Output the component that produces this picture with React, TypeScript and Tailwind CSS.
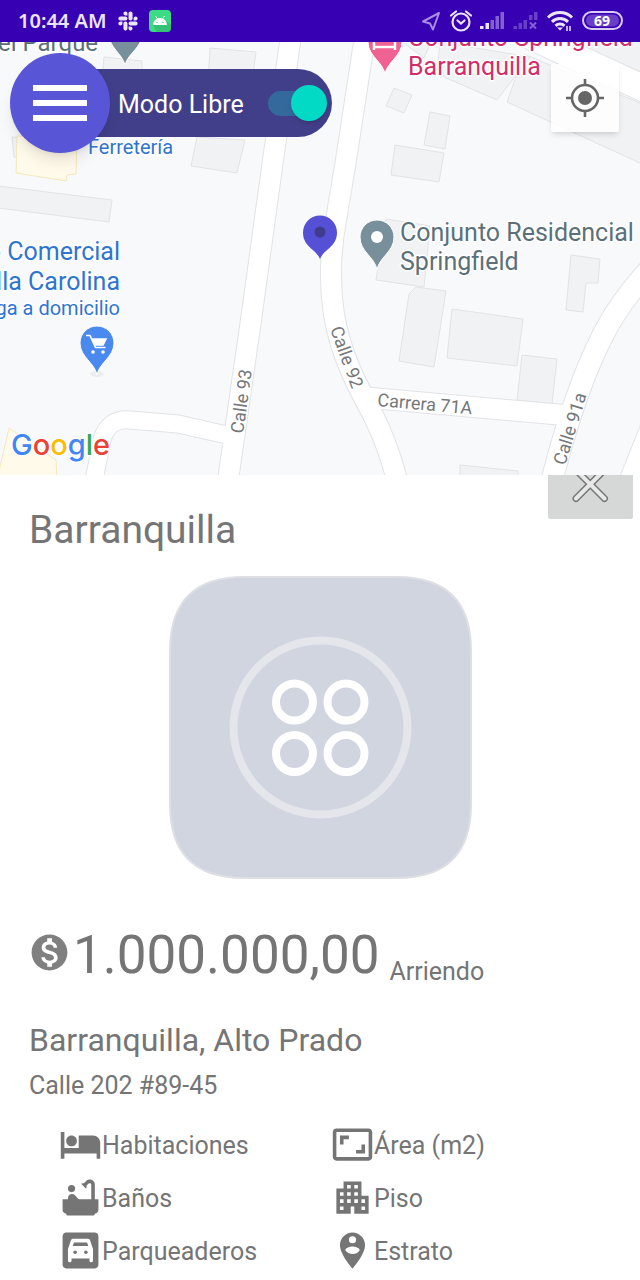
import { FaSlack } from "react-icons/fa";
import {
  MdApartment,
  MdAspectRatio,
  MdBathtub,
  MdGarage,
  MdHotel,
  MdMonetizationOn,
  MdPersonPinCircle,
} from "react-icons/md";
import type { IconType } from "react-icons";

const features: { label: string; Icon: IconType }[] = [
  { label: "Habitaciones", Icon: MdHotel },
  { label: "Área (m2)", Icon: MdAspectRatio },
  { label: "Baños", Icon: MdBathtub },
  { label: "Piso", Icon: MdApartment },
  { label: "Parqueaderos", Icon: MdGarage },
  { label: "Estrato", Icon: MdPersonPinCircle },
];

function StatusBar() {
  return (
    <header className="flex h-[42px] items-center justify-between bg-[#3700b3] pr-4 pl-[18px] text-[#ece4fa]">
      <div className="flex items-center">
        <span className="font-['Noto_Sans',sans-serif] text-[20px] leading-6 font-semibold">10:44 AM</span>
        <FaSlack className="ml-[10px] size-[22px]" />
        <svg viewBox="0 0 22 22" className="ml-[10px] size-[22px]" aria-hidden="true">
          <rect width="22" height="22" rx="4" fill="#3ddc84" />
          <path d="M4 15l4 7h10a4 4 0 0 0 4-4v-3l-4-4z" fill="#2fae6b" opacity=".6" />
          <path d="M4 15a7 7 0 0 1 14 0z" fill="#fff" />
          <path d="M6.500 6l2 3M15.500 6l-2 3" stroke="#fff" strokeWidth="1" />
          <circle cx="8" cy="12.300" r=".8" fill="#3ddc84" />
          <circle cx="14" cy="12.300" r=".8" fill="#3ddc84" />
        </svg>
      </div>
      <svg viewBox="420 4 204 36" className="h-9 w-[204px]" aria-label="Batería 69">
        <path d="M439 14L423 22.500l7 2 3 6z" fill="none" stroke="#a98be0" strokeWidth="2" strokeLinejoin="round" />
        <g fill="none" stroke="#ece4fa" strokeWidth="2.200">
          <circle cx="461" cy="23" r="8.500" />
          <path d="M457.500 21.500l3.500 3 3.500-3M451 16.500l5-4M471 16.500l-5-4" strokeLinecap="round" />
        </g>
        <g fill="#ece4fa">
          <rect x="480" y="27" width="3.500" height="3" />
          <rect x="485.500" y="24" width="3.500" height="6" />
        </g>
        <g fill="#8560d2">
          <rect x="490.500" y="21" width="3.500" height="9" />
          <rect x="495.500" y="17" width="3.500" height="13" />
          <rect x="500.500" y="13" width="3.500" height="17" />
        </g>
        <g fill="#6a3fc8">
          <rect x="513.500" y="27" width="3.500" height="3" />
          <rect x="518.500" y="24" width="3.500" height="6" />
          <rect x="523.500" y="21" width="3.500" height="9" />
          <rect x="529" y="16" width="3.500" height="5" />
          <rect x="534" y="13" width="3.500" height="8" />
        </g>
        <path d="M530 23.500l6 6M536 23.500l-6 6" stroke="#8560d2" strokeWidth="2" />
        <g fill="none" stroke="#ece4fa" strokeWidth="3">
          <path d="M548 18.500a17 17 0 0 1 24 0M552 22.800a11.500 11.500 0 0 1 16 0M555.500 26.800a6.500 6.500 0 0 1 9 0" />
        </g>
        <path d="M557 28.500h6l-3 3z" fill="#ece4fa" />
        <path d="M567 27v5M570 27v5" stroke="#ece4fa" strokeWidth="1.500" />
        <rect x="583" y="13" width="39" height="17" rx="8.500" fill="none" stroke="#d9ccf5" strokeWidth="2" />
        <path d="M586 21.500a6 6 0 0 1 6-6h21a6 6 0 0 1 0 12h-21a6 6 0 0 1-6-6z" fill="#6a3fc8" />
        <text x="602" y="26.500" textAnchor="middle" fontSize="14" fontWeight="700" fill="#fff" fontFamily="Noto Sans, sans-serif">69</text>
      </svg>
    </header>
  );
}

const roads = [
  { d: "M291 36L273 160L251 320L228 480", w: 20 },
  { d: "M365 36L346 160L336 220Q327 270 334 315C342 360 360 390 373 415Q388 445 397 480", w: 20 },
  { d: "M360 397L575 416", w: 20 },
  { d: "M660 258Q620 300 602 337Q575 390 552 480", w: 21 },
  { d: "M94 480Q99 455 102 440Q108 418 130 420L178 424L240 438", w: 17 },
];

function CityMap() {
  return (
    <svg
      viewBox="0 42 640 433"
      preserveAspectRatio="xMidYMid slice"
      className="block size-full"
      fontFamily="Roboto, sans-serif"
      role="img"
      aria-label="Mapa"
    >
      <rect y="42" width="640" height="433" fill="#f8f9fb" />
      <g fill="#f1f2f4" stroke="#e1e3e6">
        <path d="M104 57l38 4v20h-40zM210 48l46 4-4 30h-44zM197 137l48 3-8 33-46-7zM12 137l14 1v20l-12-1z" />
        <path d="M-2 186L112 200L109 222L-2 208z" />
        <path d="M394 88L412 95L404 113L386 106zM430 112L450 116L445 149L424 145zM395 145L444 153L439 182L391 175z" />
        <path d="M386 219L430 226L424 287L376 280z" />
        <path d="M409 294L416 287L446 291L434 367L399 361z" />
        <path d="M452 309L523 319L517 366L447 358z" />
        <path d="M522 355L557 359L552 404L517 400z" />
        <path d="M571 255L600 259L598 283L586 283L583 312L566 310z" />
        <path d="M460 465L518 471L518 480L460 480z" />
        <path d="M400 40h32l-8 18zM440 42l90 15-33 43-60-26zM524 54l118 50v60L507 102zM560 36h90v40z" />
      </g>
      <path d="M17 136h60l-1 38-9 1-1 6L16 173z" fill="#fffaea" stroke="#f6e8bb" />
      <path d="M9 428L56 460L57 480H-3z" fill="#fffaea" stroke="#f6e8bb" />
      <path d="M530 36L660 96" stroke="#e3e5e8" strokeWidth="28" />
      <path d="M530 36L660 96" stroke="#fff" strokeWidth="26" />
      <g fill="none">
        {roads.map((r) => (
          <path key={r.d} d={r.d} stroke="#e1e3e6" strokeWidth={r.w + 2} />
        ))}
        {roads.map((r) => (
          <path key={r.d} d={r.d} stroke="#fff" strokeWidth={r.w} />
        ))}
      </g>
      <path d="M641 424L620 476H641z" fill="#fff" stroke="#e1e3e6" />

      <g fill="#757779" fontSize="18">
        <text transform="translate(243 434) rotate(-82)">Calle 93</text>
        <text transform="translate(330 329) rotate(70)">Calle 92</text>
        <text transform="translate(377 406) rotate(5)">Carrera 71A</text>
        <text transform="translate(565 466) rotate(-73)">Calle 91a</text>
      </g>

      <g stroke="#fff" strokeWidth="3" paintOrder="stroke" strokeLinejoin="round">
        <g fill="#5b7079">
          <text x="-2" y="51" fontSize="24">el Parque</text>
          <text x="400" y="241" fontSize="25">Conjunto Residencial</text>
          <text x="400" y="270" fontSize="25">Springfield</text>
        </g>
        <g fill="#d22f6a" fontSize="25">
          <text x="408" y="46">Conjunto Springfield</text>
          <text x="408" y="75">Barranquilla</text>
        </g>
        <g fill="#2f75d0">
          <text x="88" y="154" fontSize="20">Ferretería</text>
          <text x="120" y="260" fontSize="25" textAnchor="end">Centro Comercial</text>
          <text x="120" y="290" fontSize="25" textAnchor="end">Villa Carolina</text>
          <text x="120" y="315" fontSize="20" textAnchor="end">Entrega a domicilio</text>
        </g>
      </g>

      <g fill="#78909c" stroke="#fff" strokeWidth="1">
        <path d="M125 65C122 53 109 48 109 34a16 16 0 0 1 33 0C142 48 128 53 125 65z" />
        <path d="M377 270C375 257 360 252 360 237a17 17 0 0 1 34 0C394 252 379 257 377 270z" />
      </g>
      <circle cx="377" cy="237" r="6" fill="#fff" />
      <path d="M385 74C383 62 368 56 368 42a17 17 0 0 1 34 0C402 56 387 62 385 74z" fill="#f06292" stroke="#fff" />
      <path d="M374 38v12M374 47h21M395 38v12" fill="none" stroke="#fff" strokeWidth="2.400" />
      <ellipse cx="97" cy="374" rx="7" ry="3" fill="#eceded" />
      <path d="M97 375C95 363 80 357 80 343a17 17 0 0 1 34 0C114 357 99 363 97 375z" fill="#4a89ee" stroke="#fff" />
      <path d="M86 335.500h4l5.500 12h10M92 339h14l-3 6H94.500z" fill="none" stroke="#fff" strokeWidth="1.600" />
      <path d="M92 339h14l-3 6H94.500z" fill="#fff" />
      <circle cx="93" cy="352" r="1.800" fill="#fff" />
      <circle cx="103" cy="352" r="1.800" fill="#fff" />
      <path d="M320 259C316 249 303 247 303 232.500a17 17 0 0 1 34 0C337 247 324 249 320 259z" fill="#5650d6" />
      <circle cx="320" cy="232" r="5.500" fill="#403c8c" />

      <text x="11" y="455" fontSize="29" fontWeight="500" fontFamily="Inter, sans-serif" stroke="#fff" strokeWidth="3" paintOrder="stroke" aria-label="Google">
        <tspan fill="#4285f4">G</tspan>
        <tspan fill="#ea4335">o</tspan>
        <tspan fill="#fbbc05">o</tspan>
        <tspan fill="#4285f4">g</tspan>
        <tspan fill="#34a853">l</tspan>
        <tspan fill="#ea4335">e</tspan>
      </text>
    </svg>
  );
}

function MapPanel() {
  return (
    <section className="relative h-[433px] overflow-hidden">
      <CityMap />
      <div className="absolute top-[27px] left-[60px] flex h-[68px] w-[272px] items-center justify-between rounded-r-full bg-[#423f8a] pr-[5px] pl-[58px]">
        <label htmlFor="free-mode" className="pt-[3px] text-[25px] leading-8 text-white">
          Modo Libre
        </label>
        <span className="relative flex h-9 w-[59px] items-center">
          <input
            id="free-mode"
            type="checkbox"
            role="switch"
            defaultChecked
            className="h-[25px] w-[54px] appearance-none rounded-full bg-[#34699c]"
          />
          <span className="pointer-events-none absolute right-0 size-9 rounded-full bg-[#03dac5] shadow-md" />
        </span>
      </div>
      <button
        type="button"
        aria-label="Menú"
        className="absolute top-[11px] left-[10px] flex size-[100px] flex-col items-center justify-center gap-[9px] rounded-full bg-[#5856d6] shadow-lg"
      >
        <span className="h-[6px] w-[54px] bg-white" />
        <span className="h-[6px] w-[54px] bg-white" />
        <span className="h-[6px] w-[54px] bg-white" />
      </button>
      <button
        type="button"
        aria-label="Mi ubicación"
        className="absolute top-[22px] right-[21px] flex size-[68px] items-center justify-center rounded-xs bg-white/85 shadow-md"
      >
        <svg viewBox="0 0 38 38" className="size-[38px]" fill="none" stroke="#666" strokeWidth="2.600">
          <circle cx="19" cy="19" r="13" />
          <path d="M19 0v6M19 32v6M0 19h6M32 19h6" />
          <circle cx="19" cy="19" r="7" fill="#666" stroke="none" />
        </svg>
      </button>
    </section>
  );
}

function PhotoPlaceholder() {
  return (
    <svg viewBox="0 0 303 303" className="mx-auto mt-[22px] size-[303px]" role="img" aria-label="Sin foto">
      <path
        d="M75 1H228C277 1 302 26 302 75V228C302 277 277 302 228 302H75C26 302 1 277 1 228V75C1 26 26 1 75 1z"
        fill="#d1d5e0"
        stroke="#dedfe4"
        strokeWidth="2"
      />
      <circle cx="151.500" cy="151.500" r="87" fill="none" stroke="#e4e6ec" strokeWidth="8" />
      <g fill="none" stroke="#fff" strokeWidth="8">
        <circle cx="125.500" cy="126" r="18.500" />
        <circle cx="177" cy="126" r="18.500" />
        <circle cx="125.500" cy="177.500" r="18.500" />
        <circle cx="177" cy="177.500" r="18.500" />
      </g>
    </svg>
  );
}

export default function App() {
  return (
    <div className="min-h-screen bg-white font-[Roboto,sans-serif] text-[#757575]">
      <StatusBar />
      <main>
        <MapPanel />
        <section className="pb-2">
          <div className="flex items-start justify-between pr-[7px] pl-[29px]">
            <h1 className="pt-[31px] text-[39px] leading-[48px]">Barranquilla</h1>
            <button type="button" aria-label="Cerrar" className="flex h-11 w-[85px] justify-center rounded-b-xs bg-[#d6d7d7]">
              <svg viewBox="0 0 40 44" className="h-11 w-10" strokeLinecap="round">
                <path d="M5 -5L33.500 23.500M33.500 -5L5 23.500" stroke="#777" strokeWidth="7" />
                <path d="M5 -5L33.500 23.500M33.500 -5L5 23.500" stroke="#e8e8e8" strokeWidth="4" />
              </svg>
            </button>
          </div>
          <PhotoPlaceholder />
          <div className="mt-11 flex items-end pl-7">
            <MdMonetizationOn className="mt-2 size-[43px] self-start text-[#808080]" />
            <span className="ml-[2px] text-[53px] leading-[64px]">1.000.000,00</span>
            <span className="ml-[10px] text-[25px] leading-[30px]">Arriendo</span>
          </div>
          <h2 className="mt-[33px] pl-[29px] text-[32px] leading-10">Barranquilla, Alto Prado</h2>
          <p className="mt-[10px] pl-[29px] text-[25px] leading-8">Calle 202 #89-45</p>
          <ul className="mt-[21px] grid grid-cols-2 gap-y-[10px] pr-[37px] pl-[59px]">
            {features.map(({ label, Icon }) => (
              <li key={label} className="flex items-center text-[25px] leading-8">
                <Icon className="size-[43px]" />
                <span className="pt-[2px]">{label}</span>
              </li>
            ))}
          </ul>
        </section>
      </main>
    </div>
  );
}
